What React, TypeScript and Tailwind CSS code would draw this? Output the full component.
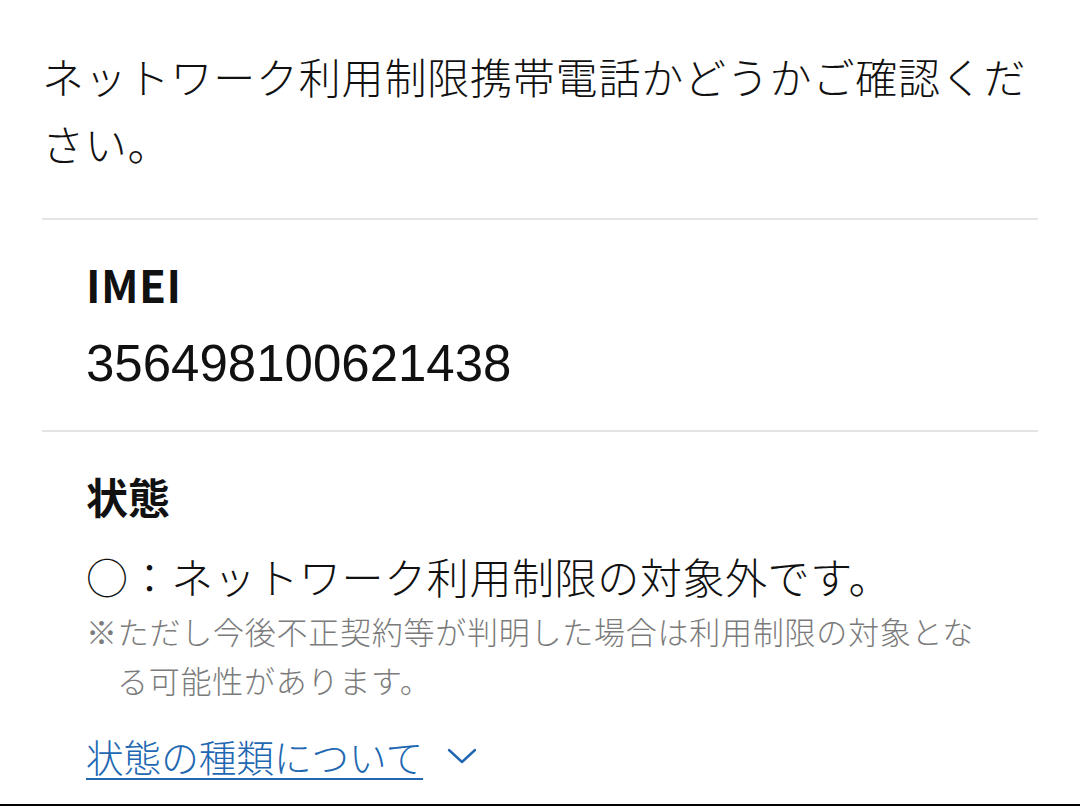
const jp = "font-['Noto_Sans_CJK_JP','Noto_Sans',sans-serif]";

function Divider() {
  return <div className="h-[2px] bg-[#e4e4e4]" />;
}

export default function App() {
  return (
    <div className={`relative h-[806px] w-[1080px] overflow-hidden bg-white text-[#111] ${jp}`}>
      <div className="px-[42px] pt-[42px]">
        {/* 案内文 */}
        <p className="mb-[42px] text-[42px] font-light leading-[67px] tracking-[0.8px]">
          ネットワーク利用制限携帯電話かどうかご確認ください。
        </p>
        <Divider />

        {/* IMEI */}
        <div className="px-[44px] pt-[34px] pb-[36px]">
          <h3 className="text-[44px] font-bold leading-[60px] tracking-[0.5px]">IMEI</h3>
          <p className="mt-[20px] font-['Liberation_Sans',sans-serif] text-[51px] leading-[60px]">
            356498100621438
          </p>
        </div>
        <Divider />

        {/* 状態 */}
        <div className="px-[44px] pt-[34px]">
          <h3 className="text-[42px] font-bold leading-[60px]">状態</h3>
          <p className="mt-[20px] text-[42px] font-light leading-[60px] tracking-[0.6px]">
            ○：ネットワーク利用制限の対象外です。
          </p>
          <p className="pl-[31px] -indent-[31px] text-[31px] font-light leading-[49px] tracking-[0.75px] text-[#7b7b7b]">
            ※ただし今後不正契約等が判明した場合は利用制限の対象となる可能性があります。
          </p>
          <div className="mt-[22px] flex h-[60px] items-center gap-[24px] text-[#2167b1]">
            <a className="text-[37.6px] font-light leading-[60px] underline decoration-2 underline-offset-[6px]">
              状態の種類について
            </a>
            <svg width="30" height="18" viewBox="0 0 30 18" fill="none">
              <path d="M2 3 L15 15 L28 3" stroke="#2167b1" strokeWidth="2.4" strokeLinecap="round" strokeLinejoin="round" />
            </svg>
          </div>
        </div>
      </div>
      <div className="absolute bottom-0 left-0 h-[2px] w-full bg-black" />
    </div>
  );
}
